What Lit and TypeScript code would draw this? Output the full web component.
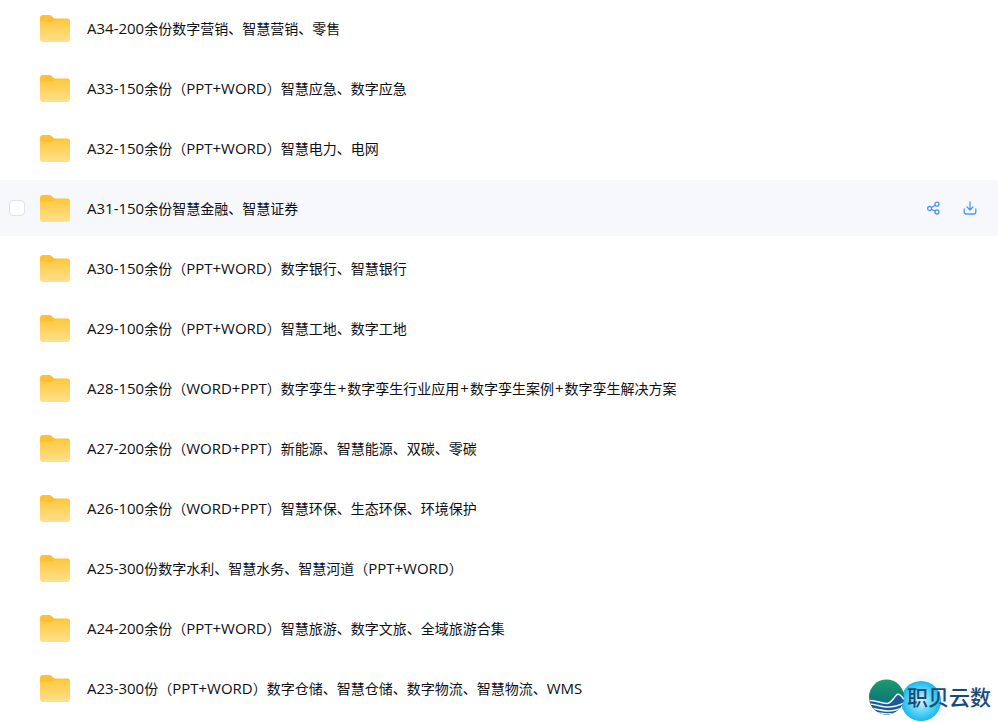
import { LitElement, html, css, svg } from "lit";
import { customElement } from "lit/decorators.js";

const ROWS = [
  "A34-200余份数字营销、智慧营销、零售",
  "A33-150余份（PPT+WORD）智慧应急、数字应急",
  "A32-150余份（PPT+WORD）智慧电力、电网",
  "A31-150余份智慧金融、智慧证券",
  "A30-150余份（PPT+WORD）数字银行、智慧银行",
  "A29-100余份（PPT+WORD）智慧工地、数字工地",
  "A28-150余份（WORD+PPT）数字孪生+数字孪生行业应用+数字孪生案例+数字孪生解决方案",
  "A27-200余份（WORD+PPT）新能源、智慧能源、双碳、零碳",
  "A26-100余份（WORD+PPT）智慧环保、生态环保、环境保护",
  "A25-300份数字水利、智慧水务、智慧河道（PPT+WORD）",
  "A24-200余份（PPT+WORD）智慧旅游、数字文旅、全域旅游合集",
  "A23-300份（PPT+WORD）数字仓储、智慧仓储、数字物流、智慧物流、WMS",
];

const runs = (name: string) =>
  name.split(/([A-Za-z0-9+\-]+)/).filter(Boolean).map((part) =>
    part === "+"
      ? html`<span class="latin plus">${part}</span>`
      : /^[A-Za-z0-9+\-]+$/.test(part)
        ? html`<span class="latin">${part}</span>`
        : part
  );

const folder = (i: number) => html`<svg class="folder" width="30" height="27" viewBox="0 0 30 27">
  <defs>
    <linearGradient id="fg${i}" x1="0" y1="0" x2="0" y2="1">
      <stop offset="0" stop-color="#ffc93f"></stop>
      <stop offset="1" stop-color="#ffe08e"></stop>
    </linearGradient>
  </defs>
  <path d="M0 3a3 3 0 0 1 3-3h6c1.500 0 2.300.5 3.200 1.600L14.500 3.500H27a3 3 0 0 1 3 3V8H0z" fill="#ffbf2e"></path>
  <path d="M0 6.500h12.500c1.300 0 2-.6 2.600-1.200.5-.5.900-.8 1.900-.8H27a3 3 0 0 1 3 3V24a3 3 0 0 1-3 3H3a3 3 0 0 1-3-3z" fill="url(#fg${i})"></path>
</svg>`;

const shareIcon = svg`<g fill="none" stroke="#4d94ff" stroke-width="1.300">
  <circle cx="2.600" cy="7.500" r="2"></circle>
  <circle cx="10" cy="3.200" r="2"></circle>
  <circle cx="10" cy="11" r="2"></circle>
  <path d="M4.500 6.500l3.800-2.300M4.500 8.500l3.800 1.700"></path>
</g>`;

const downloadIcon = svg`<g fill="none" stroke="#4d94ff" stroke-width="1.300" stroke-linecap="round" stroke-linejoin="round">
  <path d="M7 1v7.800M4 6l3 3 3-3"></path>
  <path d="M1.200 8v3a2 2 0 0 0 2 2h7.600a2 2 0 0 0 2-2V8"></path>
</g>`;

@customElement("app-root")
export class AppRoot extends LitElement {
  static styles = css`
    :host {
      display: block;
      position: relative;
      height: 722px;
      overflow: hidden;
      background: #fff;
      font-family: "Open Sans", "Noto Sans CJK SC", sans-serif;
    }
    .list {
      display: flex;
      flex-direction: column;
      gap: 4px;
    }
    .row {
      display: flex;
      align-items: center;
      height: 56px;
      flex: none;
      padding-left: 40px;
      position: relative;
    }
    .row.active {
      background: #f7f8fc;
    }
    .check {
      position: absolute;
      left: 9px;
      top: 20px;
      width: 16px;
      height: 16px;
      box-sizing: border-box;
      border: 1px solid #dfe2ea;
      border-radius: 4px;
      background: #fff;
    }
    .folder {
      flex: none;
      display: block;
      margin-right: 17px;
    }
    .name {
      font-size: 14px;
      line-height: 22px;
      padding-top: 1px;
      color: #0e1015;
      white-space: nowrap;
      flex: 1;
    }
    .latin {
      font-size: 15px;
    }
    .plus {
      padding: 0 1px;
    }
    .actions {
      display: flex;
      gap: 22px;
      padding-right: 21px;
    }
    .actions svg {
      display: block;
    }
    .logo {
      position: absolute;
      left: 868px;
      top: 672px;
      width: 130px;
      height: 50px;
    }
    .logo svg {
      position: absolute;
      left: 0;
      top: 0;
    }
    .logo-text {
      position: absolute;
      left: 39px;
      top: 10px;
      font-family: "Noto Sans CJK SC", sans-serif;
      font-size: 21px;
      line-height: 28px;
      font-weight: 500;
      color: #1a4a78;
      white-space: nowrap;
    }
  `;

  render() {
    return html`
      <div class="list">
        ${ROWS.map((name, i) => html`
          <div class="row ${i === 3 ? "active" : ""}">
            ${i === 3 ? html`<span class="check"></span>` : ""}
            ${folder(i)}
            <span class="name">${runs(name)}</span>
            ${i === 3 ? html`<div class="actions">
              <svg width="14" height="14" viewBox="0 0 14 14">${shareIcon}</svg>
              <svg width="14" height="14" viewBox="0 0 14 14">${downloadIcon}</svg>
            </div>` : ""}
          </div>
        `)}
      </div>
      <div class="logo">
        <svg width="130" height="50" viewBox="0 0 130 50">
          <defs>
            <radialGradient id="halo" cx="0.5" cy="0.5" r="0.5">
              <stop offset="0.6" stop-color="#f2f4f7"></stop>
              <stop offset="1" stop-color="#ffffff"></stop>
            </radialGradient>
            <radialGradient id="ball" cx="0.5" cy="0.5" r="0.5">
              <stop offset="0" stop-color="#d8f6fd"></stop>
              <stop offset="0.55" stop-color="#5fd6f6"></stop>
              <stop offset="1" stop-color="#1ab8ee"></stop>
            </radialGradient>
            <linearGradient id="globe" x1="0" y1="0" x2="0" y2="1">
              <stop offset="0" stop-color="#1c9c68"></stop>
              <stop offset="0.55" stop-color="#0f7a78"></stop>
              <stop offset="1" stop-color="#0f6a8a"></stop>
            </linearGradient>
            <clipPath id="gclip"><circle cx="18.500" cy="25" r="17.500"></circle></clipPath>
          </defs>
          <circle cx="58" cy="28" r="27" fill="url(#halo)"></circle>
          <circle cx="53" cy="29" r="20" fill="url(#ball)"></circle>
          <circle cx="18.500" cy="25" r="17.500" fill="url(#globe)"></circle>
          <g clip-path="url(#gclip)">
            <path d="M0 28c6-1 12 3 19 3 4 0 6-5 10-9 3-1 5 2 7 5v18H0z" fill="#1b5a96"></path>
            <path d="M0 28.500c6-1 12 3 19 3 4 0 6-5 10-9 3-1 5 2 7 5" fill="none" stroke="#eef6f8" stroke-width="1.500"></path>
            <path d="M0 32c6-.5 13 3 20 3 5 0 10-1 16-4" fill="none" stroke="#eef6f8" stroke-width="1.500"></path>
            <path d="M0 36c7 0 13 3 20 3 5 0 10-1 16-4" fill="none" stroke="#eef6f8" stroke-width="1.500"></path>
            <path d="M2 40c6 0 12 2 18 2 4 0 8-1 12-3" fill="none" stroke="#eef6f8" stroke-width="1.300"></path>
          </g>
        </svg>
        <span class="logo-text">职贝云数</span>
      </div>
    `;
  }
}
